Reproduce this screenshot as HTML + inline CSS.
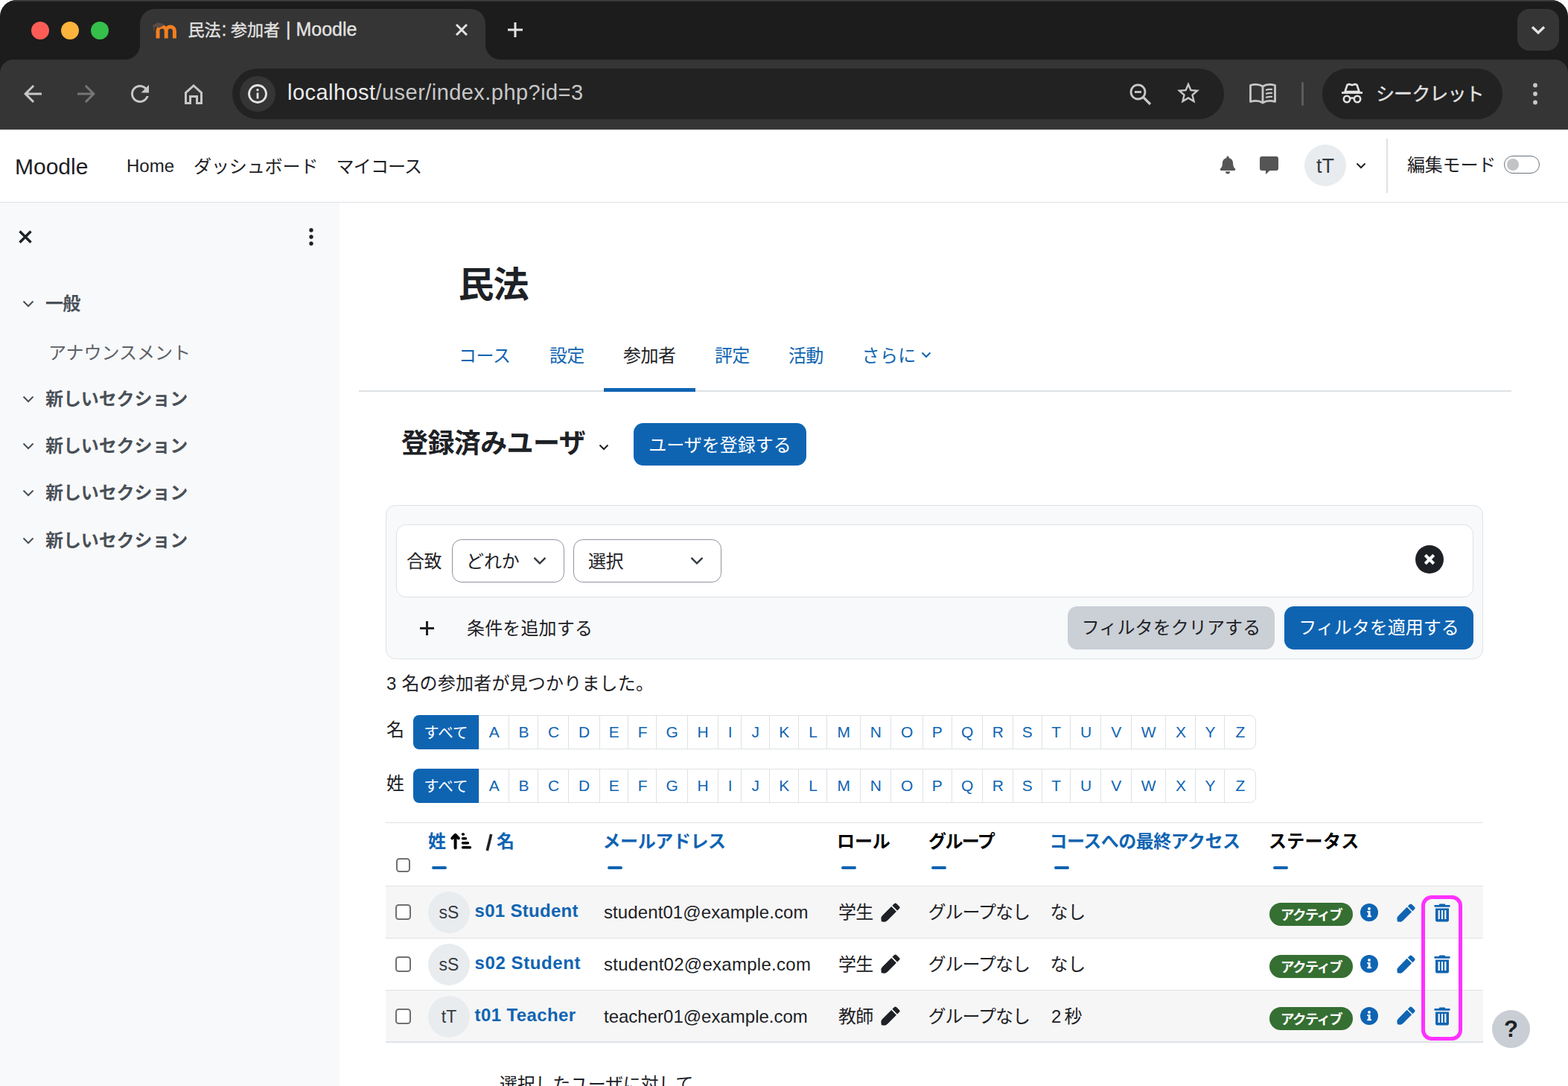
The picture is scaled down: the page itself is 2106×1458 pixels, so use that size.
<!DOCTYPE html>
<html lang="ja">
<head>
<meta charset="utf-8">
<title>民法: 参加者 | Moodle</title>
<style>
*{box-sizing:border-box;margin:0;padding:0}
html,body{width:2106px;height:1458px;overflow:hidden;background:#fff}
body{font-family:"Liberation Sans","Noto Sans CJK JP",sans-serif;color:#1d2125;position:relative;font-size:24px;line-height:1.5}
.abs{position:absolute}
.t{position:absolute;white-space:nowrap;line-height:1}
svg{display:block}
/* ---------- browser chrome ---------- */
#frame{left:0;top:0;width:2106px;height:174px;background:#1c1c1c;border-radius:22px 22px 0 0;overflow:hidden}
#frame .topline{left:0;top:0;width:2106px;height:2px;background:#3a3a3a}
#tab{left:188px;top:12px;width:464px;height:70px;background:#353535;border-radius:20px 20px 0 0}
#tab:before,#tab:after{content:"";position:absolute;bottom:2px;width:20px;height:20px}
#tab:before{left:-20px;background:radial-gradient(circle at 0 0,rgba(53,53,53,0) 19.5px,#353535 20.5px)}
#tab:after{right:-20px;background:radial-gradient(circle at 100% 0,rgba(53,53,53,0) 19.5px,#353535 20.5px)}
#toolbar{left:0;top:80px;width:2106px;height:92px;background:#353535;border-radius:18px 18px 0 0}
#chromeline{left:0;top:172px;width:2106px;height:2px;background:#393b3a}
.dot{position:absolute;top:29px;width:24px;height:24px;border-radius:50%}
#omni{left:312px;top:92px;width:1332px;height:68px;border-radius:34px;background:#222}
#omni .info{left:10px;top:10px;width:48px;height:48px;border-radius:50%;background:#353535}
#incog{left:1776px;top:92px;width:242px;height:68px;border-radius:34px;background:#222}
#tabsearch{left:2038px;top:12px;width:56px;height:56px;border-radius:16px;background:#353535}
/* ---------- moodle ---------- */
#nav{left:0;top:174px;width:2106px;height:98px;background:#fff;border-bottom:1.6px solid #dee2e6}
#drawer{left:0;top:272px;width:456px;height:1186px;background:#f8f9fa}
.lnk{color:#0f64b2}

/* main */
.tab{position:absolute;top:192px;font-size:24px;line-height:1;white-space:nowrap;color:#0f64b2}
.btn{position:absolute;border-radius:12.800px;font-size:24px;line-height:1;white-space:nowrap;text-align:center}
.sel{position:absolute;top:724px;height:57.600px;border:1.600px solid #8f959e;border-radius:12.800px;background:#fff}
.ac{position:absolute;height:46px;border:1.600px solid #dee2e6;background:#fff;color:#0f64b2;font-size:21px;line-height:44.400px;text-align:center}
.hd{position:absolute;top:1118px;font-size:24px;font-weight:bold;line-height:1;white-space:nowrap;letter-spacing:-0.600px}
.dash{position:absolute;top:1162.500px;width:20px;height:4.400px;border-radius:2.200px;background:#0f64b2}
.cb{position:absolute;left:531px;width:20.500px;height:20.500px;border:2px solid #707070;border-radius:4.500px;background:#fff}
.row{position:absolute;left:518px;width:1474px;height:70px;border-top:1.600px solid #dee2e6}
.av{position:absolute;left:575px;width:56px;height:56px;border-radius:50%;background:#e9ecef;color:#343a40;font-size:23px;line-height:56px;text-align:center}
.badge{position:absolute;left:1705px;width:112px;height:31px;border-radius:15.500px;background:#356f32;color:#fff;font-weight:bold;font-size:18.500px;line-height:33px;text-align:center;letter-spacing:-1.700px;white-space:nowrap}
.med{-webkit-text-stroke:.35px currentColor}
</style>
</head>
<body>
<!-- ======= Browser chrome ======= -->
<div id="frame" class="abs">
  <div class="topline abs"></div>
  <div class="dot" style="left:42px;background:#fd5c56"></div>
  <div class="dot" style="left:82px;background:#fdb43c"></div>
  <div class="dot" style="left:122px;background:#34c04a"></div>
  <div id="tab" class="abs"></div>
  <div id="toolbar" class="abs"></div>
  <div id="chromeline" class="abs"></div>
  <div id="omni" class="abs"><div class="info abs"></div></div>
  <div id="incog" class="abs"></div>
  <div id="tabsearch" class="abs"><svg class="abs" style="left:18px;top:22px" width="20" height="13" viewBox="0 0 20 13"><path d="M2 2.2 L10 10 L18 2.2" fill="none" stroke="#e3e3e3" stroke-width="3.4"/></svg></div>
  <!-- favicon -->
  <svg class="abs" style="left:203px;top:28px" width="36" height="24" viewBox="0 0 36 24">
    <path d="M9 23.500 V13.500 a5.600 5.600 0 0 1 11.200 0 V23.500 M20.200 13.500 a5.600 5.600 0 0 1 11.200 0 V23.500" fill="none" stroke="#f27f22" stroke-width="5"/>
    <path d="M1 6.500 L9.500 2 L19 5 L11 9.200 L4.500 8 V13 H3 V7.600 Z" fill="#5b4b45"/>
  </svg>
  <div class="t med" style="left:252.500px;top:30px;font-size:22px;color:#e3e3e3;letter-spacing:0px">民法</div>
  <div class="t med" style="left:297.500px;top:27px;font-size:25px;color:#e3e3e3">:</div>
  <div class="t med" style="left:310px;top:30px;font-size:22px;color:#e3e3e3;letter-spacing:0px">参加者</div>
  <div class="t med" style="left:384px;top:27px;font-size:25px;color:#e3e3e3">| Moodle</div>
  <svg class="abs" style="left:611px;top:31px" width="18" height="18" viewBox="0 0 18 18"><path d="M2 2 L16 16 M16 2 L2 16" stroke="#e3e3e3" stroke-width="3" fill="none"/></svg>
  <svg class="abs" style="left:681px;top:29px" width="22" height="22" viewBox="0 0 22 22"><path d="M11 1 V21 M1 11 H21" stroke="#e3e3e3" stroke-width="3" fill="none"/></svg>
  <!-- nav buttons -->
  <svg class="abs" style="left:26px;top:108px" width="36" height="36" viewBox="0 0 24 24"><path fill="#c7c7c7" d="M20 11H7.83l5.59-5.59L12 4l-8 8 8 8 1.41-1.41L7.83 13H20v-2z"/></svg>
  <svg class="abs" style="left:98px;top:108px" width="36" height="36" viewBox="0 0 24 24"><path fill="#767676" d="M4 11h12.17l-5.59-5.59L12 4l8 8-8 8-1.41-1.41L16.17 13H4v-2z"/></svg>
  <svg class="abs" style="left:170px;top:108px" width="36" height="36" viewBox="0 0 24 24"><path fill="#c7c7c7" d="M17.65 6.35C16.2 4.9 14.21 4 12 4c-4.42 0-7.99 3.58-7.99 8s3.57 8 7.99 8c3.73 0 6.84-2.55 7.73-6h-2.08c-.82 2.33-3.04 4-5.65 4-3.31 0-6-2.69-6-6s2.69-6 6-6c1.66 0 3.14.69 4.22 1.78L13 11h7V4l-2.35 2.35z"/></svg>
  <svg class="abs" style="left:244px;top:108px" width="32" height="36" viewBox="0 0 32 36"><path d="M5.5 30.5 V16.5 L16 7 L26.500 16.5 V30.5 H20.500 V21.500 H11.500 V30.5 Z" fill="none" stroke="#c7c7c7" stroke-width="3" stroke-linejoin="miter"/></svg>
  <!-- omnibox content -->
  <svg class="abs" style="left:331px;top:111px" width="30" height="30" viewBox="0 0 30 30"><circle cx="15" cy="15" r="11.5" fill="none" stroke="#e3e3e3" stroke-width="2.8"/><rect x="13.600" y="13.500" width="2.8" height="8" fill="#e3e3e3"/><circle cx="15" cy="9.800" r="1.700" fill="#e3e3e3"/></svg>
  <div class="t" id="url" style="left:386px;top:110px;font-size:29px;color:#c7c7c7;letter-spacing:0.45px"><span style="color:#ececec">localhost</span>/user/index.php?id=3</div>
  <svg class="abs" style="left:1515px;top:110px" width="34" height="34" viewBox="0 0 34 34"><circle cx="13.500" cy="13.500" r="9.500" fill="none" stroke="#c7c7c7" stroke-width="2.8"/><path d="M20.500 20.500 L30 30" stroke="#c7c7c7" stroke-width="3.200" fill="none"/><path d="M9 13.500 H18" stroke="#c7c7c7" stroke-width="2.800"/></svg>
  <svg class="abs" style="left:1578px;top:107px" width="36" height="36" viewBox="0 0 24 24"><path fill="#c7c7c7" d="M22 9.240l-7.190-.620L12 2 9.190 8.630 2 9.240l5.460 4.730L5.820 21 12 17.270 18.180 21l-1.630-7.030L22 9.240zM12 15.400l-3.760 2.270 1-4.280-3.320-2.880 4.380-.380L12 6.100l1.710 4.040 4.380.380-3.320 2.880 1 4.280L12 15.400z"/></svg>
  <!-- reading mode -->
  <svg class="abs" style="left:1676px;top:110px" width="40" height="32" viewBox="0 0 40 32"><path d="M20 6 C16 3.500 9 3 3.500 4.500 V26.500 C9 25 16 25.500 20 28 C24 25.500 31 25 36.500 26.500 V4.500 C31 3 24 3.500 20 6 Z M20 6 V28" fill="none" stroke="#c7c7c7" stroke-width="2.800" stroke-linejoin="round"/><path d="M24 11 C27 9.800 30 9.600 33 10 M24 16 C27 14.800 30 14.600 33 15 M24 21 C27 19.800 30 19.600 33 20" fill="none" stroke="#c7c7c7" stroke-width="2.200"/></svg>
  <div class="abs" style="left:1748px;top:110px;width:3px;height:32px;border-radius:2px;background:#5c5c5c"></div>
  <!-- incognito -->
  <svg class="abs" style="left:1800px;top:110px" width="32" height="32" viewBox="0 0 32 32"><path d="M9.500 4 L12 3 L16 4.200 L20 3 L22.500 4 L25.500 13 H6.500 Z" fill="none" stroke="#e3e3e3" stroke-width="2.600" stroke-linejoin="round"/><path d="M2 14.500 H30" stroke="#e3e3e3" stroke-width="2.800"/><circle cx="9" cy="23" r="4.200" fill="none" stroke="#e3e3e3" stroke-width="2.600"/><circle cx="23" cy="23" r="4.200" fill="none" stroke="#e3e3e3" stroke-width="2.600"/><path d="M13 22.500 Q16 20.500 19 22.500" fill="none" stroke="#e3e3e3" stroke-width="2.400"/></svg>
  <div class="t med" style="left:1848px;top:114px;font-size:25px;color:#e3e3e3;letter-spacing:-0.9px">シークレット</div>
  <svg class="abs" style="left:2056px;top:108px" width="12" height="36" viewBox="0 0 12 36"><circle cx="6" cy="6.500" r="2.900" fill="#c7c7c7"/><circle cx="6" cy="18" r="2.900" fill="#c7c7c7"/><circle cx="6" cy="29.500" r="2.900" fill="#c7c7c7"/></svg>
</div>
<!-- ======= Moodle navbar ======= -->
<div id="nav" class="abs">
  <div class="t" style="left:20px;top:35px;font-size:30px;color:#1d2125">Moodle</div>
  <div class="t" style="left:170px;top:37px;font-size:24px">Home</div>
  <div class="t" style="left:260px;top:37.5px;font-size:24px;letter-spacing:-0.1px">ダッシュボード</div>
  <div class="t" style="left:451.5px;top:37.5px;font-size:24px;letter-spacing:-0.8px">マイコース</div>
  <!-- bell -->
  <svg class="abs" style="left:1638px;top:35px" width="22" height="25" viewBox="0 0 25 28"><path fill="#555" d="M12.500 0.500 a1.800 1.800 0 0 1 1.800 1.800 v0.900 c3.900 0.900 6.300 4.100 6.300 8.200 c0 4.600 1.300 6.500 3 8 c0.500 0.500 0.600 1 0.600 1.400 c0 0.900 -0.700 1.700 -1.800 1.700 H2.600 c-1.100 0 -1.800 -0.800 -1.800 -1.700 c0 -0.400 0.100 -0.900 0.600 -1.400 c1.700 -1.500 3 -3.400 3 -8 c0 -4.100 2.400 -7.300 6.300 -8.200 v-0.900 a1.800 1.800 0 0 1 1.800 -1.800 Z M9 24 h7 a3.500 3.500 0 0 1 -7 0 Z"/></svg>
  <!-- chat -->
  <svg class="abs" style="left:1691px;top:35px" width="27" height="27" viewBox="0 0 27 27"><path fill="#555" d="M4 1 H23 a3 3 0 0 1 3 3 V17 a3 3 0 0 1 -3 3 H14.500 L9 25 V20 H4 a3 3 0 0 1 -3 -3 V4 a3 3 0 0 1 3 -3 Z"/></svg>
  <div class="abs" style="left:1752px;top:20px;width:56px;height:56px;border-radius:50%;background:#e9ecef"></div>
  <div class="t" style="left:1752px;top:36px;width:56px;text-align:center;font-size:27px;color:#343a40">tT</div>
  <svg class="abs" style="left:1821px;top:44px" width="14" height="9" viewBox="0 0 14 9"><path d="M1.500 1.500 L7 7 L12.500 1.500" fill="none" stroke="#1d2125" stroke-width="2"/></svg>
  <div class="abs" style="left:1862px;top:12px;width:2px;height:73px;background:#dee2e6"></div>
  <div class="t" style="left:1890px;top:36px;font-size:24px;letter-spacing:-0.2px">編集モード</div>
  <div class="abs" style="left:2020px;top:35px;width:48px;height:24px;border-radius:12px;border:1.600px solid #6a737b;background:#fff"></div>
  <div class="abs" style="left:2024px;top:39px;width:16px;height:16px;border-radius:50%;background:#c1c3c5"></div>
</div>
<!-- ======= Drawer ======= -->
<div id="drawer" class="abs">
  <svg class="abs" style="left:24px;top:36.0px" width="20" height="20" viewBox="0 0 20 20"><path d="M2.500 2.500 L17.500 17.500 M17.500 2.500 L2.500 17.500" stroke="#1d2125" stroke-width="3.400" fill="none"/></svg>
  <svg class="abs" style="left:413px;top:33.0px" width="10" height="26" viewBox="0 0 10 26"><circle cx="5" cy="4" r="2.700" fill="#1d2125"/><circle cx="5" cy="13" r="2.700" fill="#1d2125"/><circle cx="5" cy="22" r="2.700" fill="#1d2125"/></svg>
  <svg class="abs" style="left:30px;top:131.0px" width="16" height="10" viewBox="0 0 16 10"><path d="M1.500 1.500 L8 8 L14.500 1.500" fill="none" stroke="#495057" stroke-width="2"/></svg>
  <div class="t" style="left:61px;top:124.0px;font-size:24px;font-weight:bold;color:#495057;letter-spacing:-0.8px">一般</div>
  <div class="t" style="left:65px;top:189.5px;font-size:24px;color:#5c6166;letter-spacing:0px">アナウンスメント</div>
  <svg class="abs" style="left:30px;top:259.0px" width="16" height="10" viewBox="0 0 16 10"><path d="M1.500 1.500 L8 8 L14.500 1.500" fill="none" stroke="#495057" stroke-width="2"/></svg>
  <div class="t" style="left:61px;top:252.0px;font-size:24px;font-weight:bold;color:#495057;letter-spacing:-0.1px">新しいセクション</div>
  <svg class="abs" style="left:30px;top:322.0px" width="16" height="10" viewBox="0 0 16 10"><path d="M1.500 1.500 L8 8 L14.500 1.500" fill="none" stroke="#495057" stroke-width="2"/></svg>
  <div class="t" style="left:61px;top:315.0px;font-size:24px;font-weight:bold;color:#495057;letter-spacing:-0.1px">新しいセクション</div>
  <svg class="abs" style="left:30px;top:385.0px" width="16" height="10" viewBox="0 0 16 10"><path d="M1.500 1.500 L8 8 L14.500 1.500" fill="none" stroke="#495057" stroke-width="2"/></svg>
  <div class="t" style="left:61px;top:378.0px;font-size:24px;font-weight:bold;color:#495057;letter-spacing:-0.1px">新しいセクション</div>
  <svg class="abs" style="left:30px;top:449.0px" width="16" height="10" viewBox="0 0 16 10"><path d="M1.500 1.500 L8 8 L14.500 1.500" fill="none" stroke="#495057" stroke-width="2"/></svg>
  <div class="t" style="left:61px;top:442.0px;font-size:24px;font-weight:bold;color:#495057;letter-spacing:-0.1px">新しいセクション</div>
</div>
<!-- ======= Main ======= -->
<div id="main" class="abs" style="left:0;top:0;width:2106px;height:1458px;pointer-events:none">
  <div class="t" style="left:615.5px;top:359px;font-size:48px;font-weight:bold;color:#1d2125;letter-spacing:-1px">民法</div>
  <!-- tabs -->
  <div class="t lnk" style="left:616px;top:465.5px;font-size:24px;letter-spacing:-0.4px">コース</div>
  <div class="t lnk" style="left:738px;top:465.5px;font-size:24px;letter-spacing:-0.800px">設定</div>
  <div class="t" style="left:837px;top:465.5px;font-size:24px;letter-spacing:-0.500px;color:#1d2125">参加者</div>
  <div class="t lnk" style="left:960px;top:465.5px;font-size:24px;letter-spacing:-0.800px">評定</div>
  <div class="t lnk" style="left:1059px;top:465.5px;font-size:24px;letter-spacing:-0.800px">活動</div>
  <div class="t lnk" style="left:1157.5px;top:465.5px;font-size:24px;letter-spacing:0.4px">さらに</div>
  <svg class="abs" style="left:1237px;top:472px" width="14" height="9" viewBox="0 0 14 9"><path d="M1.500 1.500 L7 7 L12.500 1.500" fill="none" stroke="#0f64b2" stroke-width="2"/></svg>
  <div class="abs" style="left:482px;top:524px;width:1548px;height:1.600px;background:#dee2e6"></div>
  <div class="abs" style="left:811px;top:521px;width:123px;height:4.800px;background:#0f64b2"></div>
  <!-- heading -->
  <div class="t" style="left:539px;top:578px;font-size:36px;font-weight:bold;color:#1d2125;letter-spacing:-0.600px">登録済みユーザ</div>
  <svg class="abs" style="left:804px;top:596px" width="14" height="9" viewBox="0 0 14 9"><path d="M1.500 1.500 L7 7 L12.500 1.500" fill="none" stroke="#1d2125" stroke-width="2"/></svg>
  <div class="btn" style="left:851px;top:568px;width:232px;height:57px;background:#0f64b2;color:#fff;padding-top:17.500px;letter-spacing:0px">ユーザを登録する</div>
  <!-- filter box -->
  <div class="abs" style="left:518px;top:678px;width:1474px;height:207px;background:#f8f9fa;border:1.600px solid #dee2e6;border-radius:13px"></div>
  <div class="abs" style="left:532px;top:704px;width:1447px;height:98px;background:#fff;border:1.600px solid #dee2e6;border-radius:13px"></div>
  <div class="t" style="left:546px;top:742px;font-size:24px;letter-spacing:-0.500px">合致</div>
  <div class="sel" style="left:607px;width:151px"></div>
  <div class="t" style="left:626px;top:742px;font-size:24px;letter-spacing:-0.1px">どれか</div>
  <svg class="abs" style="left:716px;top:747px" width="18" height="12" viewBox="0 0 18 12"><path d="M1.500 1.800 L9 9.300 L16.500 1.800" fill="none" stroke="#343a40" stroke-width="2.400"/></svg>
  <div class="sel" style="left:770px;width:199px"></div>
  <div class="t" style="left:790px;top:742px;font-size:24px;letter-spacing:-0.600px">選択</div>
  <svg class="abs" style="left:927px;top:747px" width="18" height="12" viewBox="0 0 18 12"><path d="M1.500 1.800 L9 9.300 L16.500 1.800" fill="none" stroke="#343a40" stroke-width="2.400"/></svg>
  <div class="abs" style="left:1901px;top:732px;width:38px;height:38px;border-radius:50%;background:#1d2125"></div>
  <svg class="abs" style="left:1912px;top:743px" width="16" height="16" viewBox="0 0 14 14"><path d="M2 2 L12 12 M12 2 L2 12" stroke="#fff" stroke-width="3.600" fill="none"/></svg>
  <svg class="abs" style="left:563px;top:833px" width="21" height="21" viewBox="0 0 21 21"><path d="M10.500 1 V20 M1 10.500 H20" stroke="#1d2125" stroke-width="3" fill="none"/></svg>
  <div class="t" style="left:627px;top:832px;font-size:24px;letter-spacing:0.15px">条件を追加する</div>
  <div class="btn" style="left:1434px;top:814px;width:278px;height:58px;background:#cbd0d6;color:#1d2125;padding-top:17px;letter-spacing:0.1px">フィルタをクリアする</div>
  <div class="btn" style="left:1725px;top:814px;width:254px;height:58px;background:#0f64b2;color:#fff;padding-top:17px;letter-spacing:0px">フィルタを適用する</div>
  <div class="t" style="left:519px;top:905.5px;font-size:24px;letter-spacing:0.2px">3 名の参加者が見つかりました。</div>
  <!-- initials bars -->
  <div class="t" style="left:519px;top:968px;font-size:24px">名</div>
  <div class="abs" style="left:554.800px;top:960px;width:88.900px;height:46px;background:#0f64b2;border-radius:8px 0 0 8px"></div>
  <div class="t" style="left:554.800px;top:973.5px;width:88px;text-align:center;font-size:20.500px;color:#fff;letter-spacing:0px">すべて</div>
  <div class="ac" style="left:642.9px;top:960px;width:41.8px">A</div>
  <div class="ac" style="left:683.1px;top:960px;width:40.9px">B</div>
  <div class="ac" style="left:722.4px;top:960px;width:42.4px">C</div>
  <div class="ac" style="left:763.2px;top:960px;width:42.9px">D</div>
  <div class="ac" style="left:804.5px;top:960px;width:40.4px">E</div>
  <div class="ac" style="left:843.3px;top:960px;width:39.5px">F</div>
  <div class="ac" style="left:881.2px;top:960px;width:42.9px">G</div>
  <div class="ac" style="left:922.5px;top:960px;width:43.4px">H</div>
  <div class="ac" style="left:964.3px;top:960px;width:32.6px">I</div>
  <div class="ac" style="left:995.3px;top:960px;width:38.8px">J</div>
  <div class="ac" style="left:1032.5px;top:960px;width:41.4px">K</div>
  <div class="ac" style="left:1072.3px;top:960px;width:39.6px">L</div>
  <div class="ac" style="left:1110.3px;top:960px;width:45.8px">M</div>
  <div class="ac" style="left:1154.5px;top:960px;width:43.5px">N</div>
  <div class="ac" style="left:1196.4px;top:960px;width:43.8px">O</div>
  <div class="ac" style="left:1238.6px;top:960px;width:40.5px">P</div>
  <div class="ac" style="left:1277.5px;top:960px;width:43.5px">Q</div>
  <div class="ac" style="left:1319.4px;top:960px;width:41.8px">R</div>
  <div class="ac" style="left:1359.6px;top:960px;width:40.5px">S</div>
  <div class="ac" style="left:1398.5px;top:960px;width:40.5px">T</div>
  <div class="ac" style="left:1437.4px;top:960px;width:42.4px">U</div>
  <div class="ac" style="left:1478.2px;top:960px;width:41.9px">V</div>
  <div class="ac" style="left:1518.5px;top:960px;width:48.4px">W</div>
  <div class="ac" style="left:1565.3px;top:960px;width:41.5px">X</div>
  <div class="ac" style="left:1605.2px;top:960px;width:40.8px">Y</div>
  <div class="ac" style="left:1644.4px;top:960px;width:42.9px;border-radius:0 8px 8px 0">Z</div>
  <div class="t" style="left:519px;top:1040px;font-size:24px">姓</div>
  <div class="abs" style="left:554.800px;top:1032px;width:88.900px;height:46px;background:#0f64b2;border-radius:8px 0 0 8px"></div>
  <div class="t" style="left:554.800px;top:1045.5px;width:88px;text-align:center;font-size:20.500px;color:#fff;letter-spacing:0px">すべて</div>
  <div class="ac" style="left:642.9px;top:1032px;width:41.8px">A</div>
  <div class="ac" style="left:683.1px;top:1032px;width:40.9px">B</div>
  <div class="ac" style="left:722.4px;top:1032px;width:42.4px">C</div>
  <div class="ac" style="left:763.2px;top:1032px;width:42.9px">D</div>
  <div class="ac" style="left:804.5px;top:1032px;width:40.4px">E</div>
  <div class="ac" style="left:843.3px;top:1032px;width:39.5px">F</div>
  <div class="ac" style="left:881.2px;top:1032px;width:42.9px">G</div>
  <div class="ac" style="left:922.5px;top:1032px;width:43.4px">H</div>
  <div class="ac" style="left:964.3px;top:1032px;width:32.6px">I</div>
  <div class="ac" style="left:995.3px;top:1032px;width:38.8px">J</div>
  <div class="ac" style="left:1032.5px;top:1032px;width:41.4px">K</div>
  <div class="ac" style="left:1072.3px;top:1032px;width:39.6px">L</div>
  <div class="ac" style="left:1110.3px;top:1032px;width:45.8px">M</div>
  <div class="ac" style="left:1154.5px;top:1032px;width:43.5px">N</div>
  <div class="ac" style="left:1196.4px;top:1032px;width:43.8px">O</div>
  <div class="ac" style="left:1238.6px;top:1032px;width:40.5px">P</div>
  <div class="ac" style="left:1277.5px;top:1032px;width:43.5px">Q</div>
  <div class="ac" style="left:1319.4px;top:1032px;width:41.8px">R</div>
  <div class="ac" style="left:1359.6px;top:1032px;width:40.5px">S</div>
  <div class="ac" style="left:1398.5px;top:1032px;width:40.5px">T</div>
  <div class="ac" style="left:1437.4px;top:1032px;width:42.4px">U</div>
  <div class="ac" style="left:1478.2px;top:1032px;width:41.9px">V</div>
  <div class="ac" style="left:1518.5px;top:1032px;width:48.4px">W</div>
  <div class="ac" style="left:1565.3px;top:1032px;width:41.5px">X</div>
  <div class="ac" style="left:1605.2px;top:1032px;width:40.8px">Y</div>
  <div class="ac" style="left:1644.4px;top:1032px;width:42.9px;border-radius:0 8px 8px 0">Z</div>
  <!-- table -->
  <div class="abs" style="left:518px;top:1103.500px;width:1474px;height:1.600px;background:#dee2e6"></div>
  <div class="cb" style="left:532px;top:1152px;width:19px;height:19px"></div>
  <div class="hd" style="left:575px;color:#0f64b2">姓</div>
  <svg class="abs" style="left:604px;top:1116px" width="32" height="26" viewBox="0 0 32 26"><path d="M7.600 22.500 V5 M3.300 9.300 L7.600 4.800 L11.900 9.300" fill="none" stroke="#000" stroke-width="4" stroke-linecap="round" stroke-linejoin="round"/><path d="M17.500 4 H18.500 M17.500 9.800 H21.500 M17.500 15.800 H24.500 M17.500 21.800 H27.500" stroke="#000" stroke-width="3.400" stroke-linecap="round"/></svg>
  <svg class="abs" style="left:651px;top:1118px" width="12" height="26" viewBox="0 0 12 26"><path d="M8.700 2 L3.300 24" stroke="#1d2125" stroke-width="3.600" fill="none"/></svg>
  <div class="hd" style="left:667px;color:#0f64b2">名</div>
  <div class="dash" style="left:579.500px"></div>
  <div class="hd" style="left:809.5px;color:#0f64b2;letter-spacing:-0.4px">メールアドレス</div>
  <div class="dash" style="left:815.500px"></div>
  <div class="hd" style="left:1124px;color:#000;letter-spacing:-0.1px">ロール</div>
  <div class="dash" style="left:1130px"></div>
  <div class="hd" style="left:1247px;color:#000;letter-spacing:-1.600px">グループ</div>
  <div class="dash" style="left:1251px"></div>
  <div class="hd" style="left:1409.5px;color:#0f64b2;letter-spacing:-0.5px">コースへの最終アクセス</div>
  <div class="dash" style="left:1415.500px"></div>
  <div class="hd" style="left:1704px;color:#000;letter-spacing:0.3px">ステータス</div>
  <div class="dash" style="left:1710px"></div>
  <div class="row" style="top:1188.7px;background:#f6f6f6"></div>
  <div class="cb" style="top:1214.4px"></div>
  <div class="av" style="top:1196.8px">sS</div>
  <div class="t" style="left:637.500px;top:1210.8px;font-size:24px;font-weight:bold;color:#0f64b2;letter-spacing:0.3px">s01 Student</div>
  <div class="t" style="left:811px;top:1213.3px;font-size:24px;letter-spacing:0.1px">student01@example.com</div>
  <div class="t" style="left:1126px;top:1213.3px;font-size:24px;letter-spacing:-0.800px">学生</div>
  <svg class="abs" style="left:1183px;top:1211.8px" width="26" height="26" viewBox="0 0 24 24"><g transform="translate(0.8 23.2) rotate(-45)" fill="#1d2125"><path d="M0 0 L2.600 -3.300 Q3.800 -4.400 6.500 -4.400 H21.800 V4.400 H6.500 Q3.800 4.400 2.600 3.300 Z"/><path d="M23.400 -4.400 H27 a1.800 1.800 0 0 1 1.800 1.800 V2.600 a1.800 1.800 0 0 1 -1.800 1.800 H23.400 Z"/></g></svg>
  <div class="t" style="left:1246.5px;top:1213.3px;font-size:24px;letter-spacing:-1px">グループなし</div>
  <div class="t" style="left:1410.5px;top:1213.3px;font-size:24px;letter-spacing:-0.2px">なし</div>
  <div class="badge" style="top:1211.8px">アクティブ</div>
  <svg class="abs" style="left:1827px;top:1212.8px" width="24" height="24" viewBox="0 0 24 24"><circle cx="12" cy="12" r="12" fill="#0f64b2"/><circle cx="12" cy="7" r="1.900" fill="#fff"/><path fill="#fff" d="M9.300 10 H13.600 V16.300 H15 V18.300 H9.300 V16.300 H10.600 V12 H9.300 Z"/></svg>
  <svg class="abs" style="left:1875.5px;top:1212.5px" width="25" height="25" viewBox="0 0 24 24"><g transform="translate(0.8 23.2) rotate(-45)" fill="#0f64b2"><path d="M0 0 L2.600 -3.300 Q3.800 -4.400 6.500 -4.400 H21.800 V4.400 H6.500 Q3.800 4.400 2.600 3.300 Z"/><path d="M23.400 -4.400 H27 a1.800 1.800 0 0 1 1.800 1.800 V2.600 a1.800 1.800 0 0 1 -1.800 1.800 H23.400 Z"/></g></svg>
  <svg class="abs" style="left:1926px;top:1212.8px" width="22" height="25" viewBox="0 0 22 25"><path fill="#0f64b2" d="M7.500 0.500 H14.500 L15.500 2 H20.800 a0.800 0.800 0 0 1 0.800 0.800 V4 a0.800 0.800 0 0 1 -0.800 0.800 H1.200 a0.800 0.800 0 0 1 -0.800 -0.800 V2.800 a0.800 0.800 0 0 1 0.800 -0.800 H6.500 Z M2 6.500 H20 V22 a2.500 2.500 0 0 1 -2.500 2.500 H4.500 a2.500 2.500 0 0 1 -2.500 -2.500 Z"/><rect x="5.600" y="9" width="2.200" height="12" fill="#f6f6f6"/><rect x="9.900" y="9" width="2.200" height="12" fill="#f6f6f6"/><rect x="14.200" y="9" width="2.200" height="12" fill="#f6f6f6"/></svg>
  <div class="row" style="top:1258.6px;background:#fff"></div>
  <div class="cb" style="top:1284.3px"></div>
  <div class="av" style="top:1266.7px">sS</div>
  <div class="t" style="left:637.500px;top:1280.7px;font-size:24px;font-weight:bold;color:#0f64b2;letter-spacing:0.6px">s02 Student</div>
  <div class="t" style="left:811px;top:1283.2px;font-size:24px;letter-spacing:0.27px">student02@example.com</div>
  <div class="t" style="left:1126px;top:1283.2px;font-size:24px;letter-spacing:-0.800px">学生</div>
  <svg class="abs" style="left:1183px;top:1281.2px" width="26" height="26" viewBox="0 0 24 24"><g transform="translate(0.8 23.2) rotate(-45)" fill="#1d2125"><path d="M0 0 L2.600 -3.300 Q3.800 -4.400 6.500 -4.400 H21.800 V4.400 H6.500 Q3.800 4.400 2.600 3.300 Z"/><path d="M23.400 -4.400 H27 a1.800 1.800 0 0 1 1.800 1.800 V2.600 a1.800 1.800 0 0 1 -1.800 1.800 H23.400 Z"/></g></svg>
  <div class="t" style="left:1246.5px;top:1283.2px;font-size:24px;letter-spacing:-1px">グループなし</div>
  <div class="t" style="left:1410.5px;top:1283.2px;font-size:24px;letter-spacing:-0.2px">なし</div>
  <div class="badge" style="top:1281.7px">アクティブ</div>
  <svg class="abs" style="left:1827px;top:1282.2px" width="24" height="24" viewBox="0 0 24 24"><circle cx="12" cy="12" r="12" fill="#0f64b2"/><circle cx="12" cy="7" r="1.900" fill="#fff"/><path fill="#fff" d="M9.300 10 H13.600 V16.300 H15 V18.300 H9.300 V16.300 H10.600 V12 H9.300 Z"/></svg>
  <svg class="abs" style="left:1875.5px;top:1281.9px" width="25" height="25" viewBox="0 0 24 24"><g transform="translate(0.8 23.2) rotate(-45)" fill="#0f64b2"><path d="M0 0 L2.600 -3.300 Q3.800 -4.400 6.500 -4.400 H21.800 V4.400 H6.500 Q3.800 4.400 2.600 3.300 Z"/><path d="M23.400 -4.400 H27 a1.800 1.800 0 0 1 1.800 1.800 V2.600 a1.800 1.800 0 0 1 -1.800 1.800 H23.400 Z"/></g></svg>
  <svg class="abs" style="left:1926px;top:1282.2px" width="22" height="25" viewBox="0 0 22 25"><path fill="#0f64b2" d="M7.500 0.500 H14.500 L15.500 2 H20.800 a0.800 0.800 0 0 1 0.800 0.800 V4 a0.800 0.800 0 0 1 -0.800 0.800 H1.200 a0.800 0.800 0 0 1 -0.800 -0.800 V2.800 a0.800 0.800 0 0 1 0.800 -0.800 H6.500 Z M2 6.500 H20 V22 a2.500 2.500 0 0 1 -2.500 2.500 H4.500 a2.500 2.500 0 0 1 -2.500 -2.500 Z"/><rect x="5.600" y="9" width="2.200" height="12" fill="#fff"/><rect x="9.900" y="9" width="2.200" height="12" fill="#fff"/><rect x="14.200" y="9" width="2.200" height="12" fill="#fff"/></svg>
  <div class="row" style="top:1328.5px;background:#f6f6f6"></div>
  <div class="cb" style="top:1354.2px"></div>
  <div class="av" style="top:1336.6px">tT</div>
  <div class="t" style="left:637.500px;top:1350.6px;font-size:24px;font-weight:bold;color:#0f64b2;letter-spacing:0.4px">t01 Teacher</div>
  <div class="t" style="left:811px;top:1353.1px;font-size:24px;letter-spacing:0.0px">teacher01@example.com</div>
  <div class="t" style="left:1126px;top:1353.1px;font-size:24px;letter-spacing:-0.800px">教師</div>
  <svg class="abs" style="left:1183px;top:1350.6px" width="26" height="26" viewBox="0 0 24 24"><g transform="translate(0.8 23.2) rotate(-45)" fill="#1d2125"><path d="M0 0 L2.600 -3.300 Q3.800 -4.400 6.500 -4.400 H21.800 V4.400 H6.500 Q3.800 4.400 2.600 3.300 Z"/><path d="M23.400 -4.400 H27 a1.800 1.800 0 0 1 1.800 1.800 V2.600 a1.800 1.800 0 0 1 -1.800 1.800 H23.400 Z"/></g></svg>
  <div class="t" style="left:1246.5px;top:1353.1px;font-size:24px;letter-spacing:-1px">グループなし</div>
  <div class="t" style="left:1412px;top:1353.1px;font-size:24px;letter-spacing:-1.200px">2 秒</div>
  <div class="badge" style="top:1351.6px">アクティブ</div>
  <svg class="abs" style="left:1827px;top:1351.6px" width="24" height="24" viewBox="0 0 24 24"><circle cx="12" cy="12" r="12" fill="#0f64b2"/><circle cx="12" cy="7" r="1.900" fill="#fff"/><path fill="#fff" d="M9.300 10 H13.600 V16.300 H15 V18.300 H9.300 V16.300 H10.600 V12 H9.300 Z"/></svg>
  <svg class="abs" style="left:1875.5px;top:1351.3px" width="25" height="25" viewBox="0 0 24 24"><g transform="translate(0.8 23.2) rotate(-45)" fill="#0f64b2"><path d="M0 0 L2.600 -3.300 Q3.800 -4.400 6.500 -4.400 H21.800 V4.400 H6.500 Q3.800 4.400 2.600 3.300 Z"/><path d="M23.400 -4.400 H27 a1.800 1.800 0 0 1 1.800 1.800 V2.600 a1.800 1.800 0 0 1 -1.800 1.800 H23.400 Z"/></g></svg>
  <svg class="abs" style="left:1926px;top:1351.6px" width="22" height="25" viewBox="0 0 22 25"><path fill="#0f64b2" d="M7.500 0.500 H14.500 L15.500 2 H20.800 a0.800 0.800 0 0 1 0.800 0.800 V4 a0.800 0.800 0 0 1 -0.800 0.800 H1.200 a0.800 0.800 0 0 1 -0.800 -0.800 V2.800 a0.800 0.800 0 0 1 0.800 -0.800 H6.500 Z M2 6.500 H20 V22 a2.500 2.500 0 0 1 -2.500 2.500 H4.500 a2.500 2.500 0 0 1 -2.500 -2.500 Z"/><rect x="5.600" y="9" width="2.200" height="12" fill="#f6f6f6"/><rect x="9.900" y="9" width="2.200" height="12" fill="#f6f6f6"/><rect x="14.200" y="9" width="2.200" height="12" fill="#f6f6f6"/></svg>
  <div class="abs" style="left:518px;top:1398.400px;width:1474px;height:1.600px;background:#dee2e6"></div>
  <div class="abs" style="left:1909px;top:1202px;width:55px;height:195px;border:5.500px solid #ff31ff;border-radius:14px"></div>
  <div class="abs" style="left:2004px;top:1356px;width:51px;height:51px;border-radius:50%;background:#c9ced5"></div>
  <div class="t" style="left:2004px;top:1366px;width:51px;text-align:center;font-size:31px;font-weight:bold;color:#1d2125">?</div>
  <div class="t" style="left:671px;top:1444px;font-size:24px;letter-spacing:-0.26px">選択したユーザに対して</div>
</div>
</body>
</html>
